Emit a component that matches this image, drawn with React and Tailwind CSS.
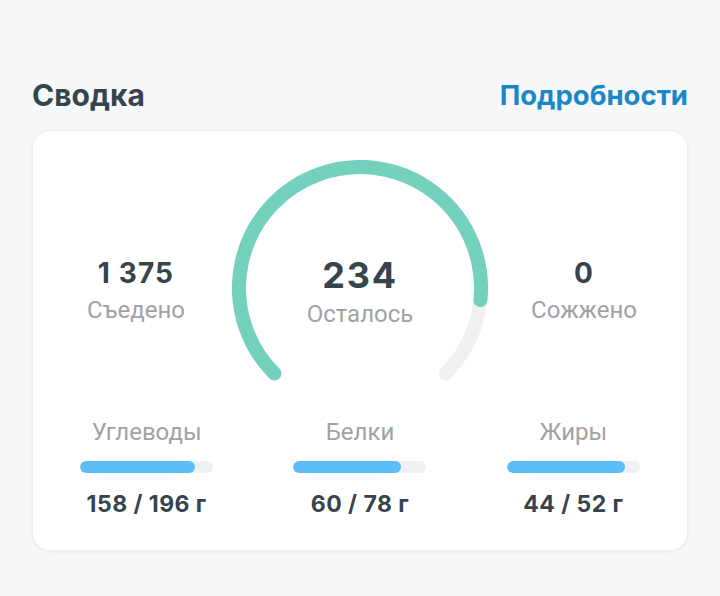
import React from "react";

const bold = { fontFamily: "Inter, 'Noto Sans', sans-serif" };
const reg = { fontFamily: "Roboto, 'Noto Sans', sans-serif" };

function polar(cx, cy, r, deg) {
  const a = (deg * Math.PI) / 180;
  return [cx + r * Math.cos(a), cy + r * Math.sin(a)];
}

function Gauge({ fraction }) {
  const cx = 128, cy = 128, r = 121;
  const start = 135;
  const total = 270;
  const [sx, sy] = polar(cx, cy, r, start);
  const [ex, ey] = polar(cx, cy, r, start + total);
  const sweep = total * fraction;
  const [gx, gy] = polar(cx, cy, r, start + sweep);
  const track = `M ${sx} ${sy} A ${r} ${r} 0 1 1 ${ex} ${ey}`;
  const green = `M ${sx} ${sy} A ${r} ${r} 0 ${sweep > 180 ? 1 : 0} 1 ${gx} ${gy}`;
  return (
    <svg width="256" height="224" viewBox="0 0 256 224" className="block">
      <path d={track} fill="none" stroke="#eff1f3" strokeWidth="14" strokeLinecap="round" />
      <path d={green} fill="none" stroke="#74d1be" strokeWidth="14" strokeLinecap="round" />
    </svg>
  );
}

function Side({ value, label }) {
  return (
    <div className="flex-1 flex flex-col items-center mt-[97px]">
      <div className="text-[28px] leading-[32px] font-bold tracking-[0.04em] text-[#36444e] whitespace-pre" style={bold}>{value}</div>
      <div className="mt-[7px] text-[24px] leading-[28px] text-[#9fa3a7]" style={reg}>{label}</div>
    </div>
  );
}

function Macro({ label, value, pct }) {
  return (
    <div className="flex-1 flex flex-col items-center">
      <div className="text-[24px] leading-[28px] text-[#9fa3a7]" style={reg}>{label}</div>
      <div className="mt-[15px] w-[133px] h-[12px] rounded-full bg-[#eff1f3] overflow-hidden">
        <div className="h-full rounded-full bg-[#5bbcf6]" style={{ width: `${pct}%` }} />
      </div>
      <div className="mt-[17px] text-[23px] leading-[28px] font-bold tracking-[0.02em] text-[#36444e]" style={bold}>{value}</div>
    </div>
  );
}

export default function App() {
  return (
    <div className="w-[720px] h-[596px] bg-[#f6f8fa] pt-[78px] px-[32px]">
      <div className="flex items-center justify-between">
        <div className="text-[30px] leading-[34px] font-bold text-[#36444e]" style={bold}>Сводка</div>
        <div className="text-[27.5px] leading-[34px] font-bold text-[#1a87c8]" style={bold}>Подробности</div>
      </div>
      <div className="mt-[18px] bg-white rounded-[18px] border border-[#eceef1] shadow-[0_1px_3px_rgba(0,0,0,0.06)] px-[7px] pt-[29px] pb-[32px]">
        <div className="flex items-start">
          <Side value="1 375" label="Съедено" />
          <div className="relative w-[256px] h-[224px]">
            <Gauge fraction={1375 / 1609} />
            <div className="absolute left-0 right-0 top-[95px] flex flex-col items-center">
              <div className="text-[36px] leading-[40px] font-bold tracking-[0.05em] text-[#36444e]" style={bold}>234</div>
              <div className="mt-[5px] text-[24px] leading-[28px] text-[#9fa3a7]" style={reg}>Осталось</div>
            </div>
          </div>
          <Side value="0" label="Сожжено" />
        </div>
        <div className="mt-[34px] flex">
          <Macro label="Углеводы" value="158 / 196 г" pct={86} />
          <Macro label="Белки" value="60 / 78 г" pct={81} />
          <Macro label="Жиры" value="44 / 52 г" pct={89} />
        </div>
      </div>
    </div>
  );
}
